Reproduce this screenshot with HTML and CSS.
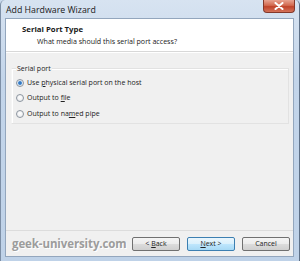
FILE: index.html
```html
<!DOCTYPE html>
<html>
<head>
<meta charset="utf-8">
<link rel="stylesheet" href="styles.css">
</head>
<body>
<div class="window">
  <div class="titlebar">
    <span class="title">Add Hardware Wizard</span>
    <span class="close">
      <svg width="10" height="8" viewBox="0 0 10 8"><path d="M1.5 1 L8.5 7 M8.5 1 L1.5 7" stroke="#ffffff" stroke-width="2" stroke-linecap="round"/></svg>
    </span>
  </div>
  <div class="client">
    <div class="header">
      <div class="h-title">Serial Port Type</div>
      <div class="h-sub">What media should this serial port access?</div>
    </div>
    <div class="content">
      <div class="group">
        <div class="legend">Serial port</div>
        <label class="radio"><span class="dot checked"></span><span class="lbl">Use <u>p</u>hysical serial port on the host</span></label>
        <label class="radio"><span class="dot"></span><span class="lbl">Output to <u>f</u>ile</span></label>
        <label class="radio"><span class="dot"></span><span class="lbl">Output to na<u>m</u>ed pipe</span></label>
      </div>
    </div>
    <div class="footer">
      <span class="brand">geek-university.com</span>
      <div class="buttons">
        <span class="btn">&lt; <u>B</u>ack</span>
        <span class="btn primary"><u>N</u>ext &gt;</span>
        <span class="btn">Cancel</span>
      </div>
    </div>
  </div>
</div>
</body>
</html>
```
FILE: styles.css
```css
html, body {
  margin: 0;
  padding: 0;
  width: 300px;
  height: 261px;
  overflow: hidden;
  background: #c9d9ec;
}
.window {
  width: 300px;
  height: 261px;
  box-sizing: border-box;
  display: flex;
  flex-direction: column;
  background: linear-gradient(180deg, #d7e3f1 0%, #c3d5ea 30%, #bfd2e8 100%);
  border-left: 1px solid #7d8fa6;
  border-right: 1px solid #5d6f86;
  border-radius: 5px 5px 0 0;
  font-family: "Open Sans", "Noto Sans", sans-serif;
  color: #1a1a1a;
}
.titlebar {
  height: 18px;
  display: flex;
  justify-content: space-between;
  align-items: flex-start;
  padding-left: 5px;
  padding-right: 4px;
}
.title {
  font-size: 8.8px;
  line-height: 20px;
  color: #202020;
}
.close {
  width: 32px;
  height: 13px;
  display: flex;
  align-items: center;
  justify-content: center;
  background: linear-gradient(180deg, #e8a391 0%, #d2694f 45%, #c0432a 55%, #d4735a 100%);
  border: 1px solid #83382a;
  border-top: none;
  border-radius: 0 0 4px 4px;
  box-sizing: border-box;
}
.client {
  flex: 1;
  margin: 0 5px 4px 4px;
  display: flex;
  flex-direction: column;
  background: #f0f0f0;
  border: 1px solid #93a6bd;
}
.header {
  height: 33px;
  background: #ffffff;
  border-bottom: 1px solid #d8d8d8;
  box-shadow: 0 1px 0 #ffffff;
  box-sizing: border-box;
  padding: 5px 0 0 16px;
}
.h-title {
  font-weight: bold;
  font-size: 7.8px;
  line-height: 11px;
}
.h-sub {
  font-size: 7.1px;
  line-height: 12px;
  padding-left: 15px;
}
.content {
  flex: 1;
  padding: 16px 4px 0 5px;
}
.group {
  height: 56px;
  border: 1px solid #e2e2e2;
  box-shadow: inset 1px 1px 0 #ffffff;
  border-left-color: #f5f5f5;
  box-sizing: border-box;
  padding: 0 0 0 4px;
  font-size: 7px;
}
.legend {
  font-size: 7px;
  line-height: 10px;
  height: 11px;
  margin-top: -5px;
  width: fit-content;
  background: #f0f0f0;
  padding: 0 1px;
}
.radio {
  display: flex;
  align-items: center;
  font-size: 7px;
  line-height: 10px;
  height: 15.5px;
  color: #222;
}
.radio u { text-decoration: underline; }
.dot {
  width: 6px;
  height: 6px;
  border-radius: 50%;
  border: 1px solid #8c959f;
  background: radial-gradient(circle at 50% 40%, #ffffff 0%, #e4e6e9 100%);
  margin-right: 3px;
  flex: none;
}
.dot.checked {
  background: radial-gradient(circle, #2d6bb2 0%, #3f86cf 35%, #dfe8f2 55%, #f6f6f6 100%);
}
.footer {
  height: 25px;
  border-top: 1px solid #dcdcdc;
  display: flex;
  align-items: center;
  justify-content: space-between;
  padding: 0 3px 0 6px;
}
.brand {
  font-family: "Open Sans", "Noto Sans", sans-serif;
  font-weight: bold;
  font-size: 11.5px;
  color: #9c9c9c;
  letter-spacing: -0.1px;
  text-shadow: 1px 1px 0 #ffffff;
}
.buttons {
  display: flex;
  gap: 7px;
}
.btn {
  width: 48px;
  height: 14px;
  box-sizing: border-box;
  border: 1px solid #707070;
  border-radius: 2px;
  background: linear-gradient(180deg, #f4f4f4 0%, #ebebeb 50%, #dcdcdc 51%, #cfcfcf 100%);
  font-size: 7px;
  line-height: 12px;
  text-align: center;
  color: #222;
}
.btn.primary {
  border-color: #3c7fb1;
  background: linear-gradient(180deg, #eaf6fd 0%, #d9f0fc 50%, #bee6fd 51%, #a7d9f5 100%);
}
```
